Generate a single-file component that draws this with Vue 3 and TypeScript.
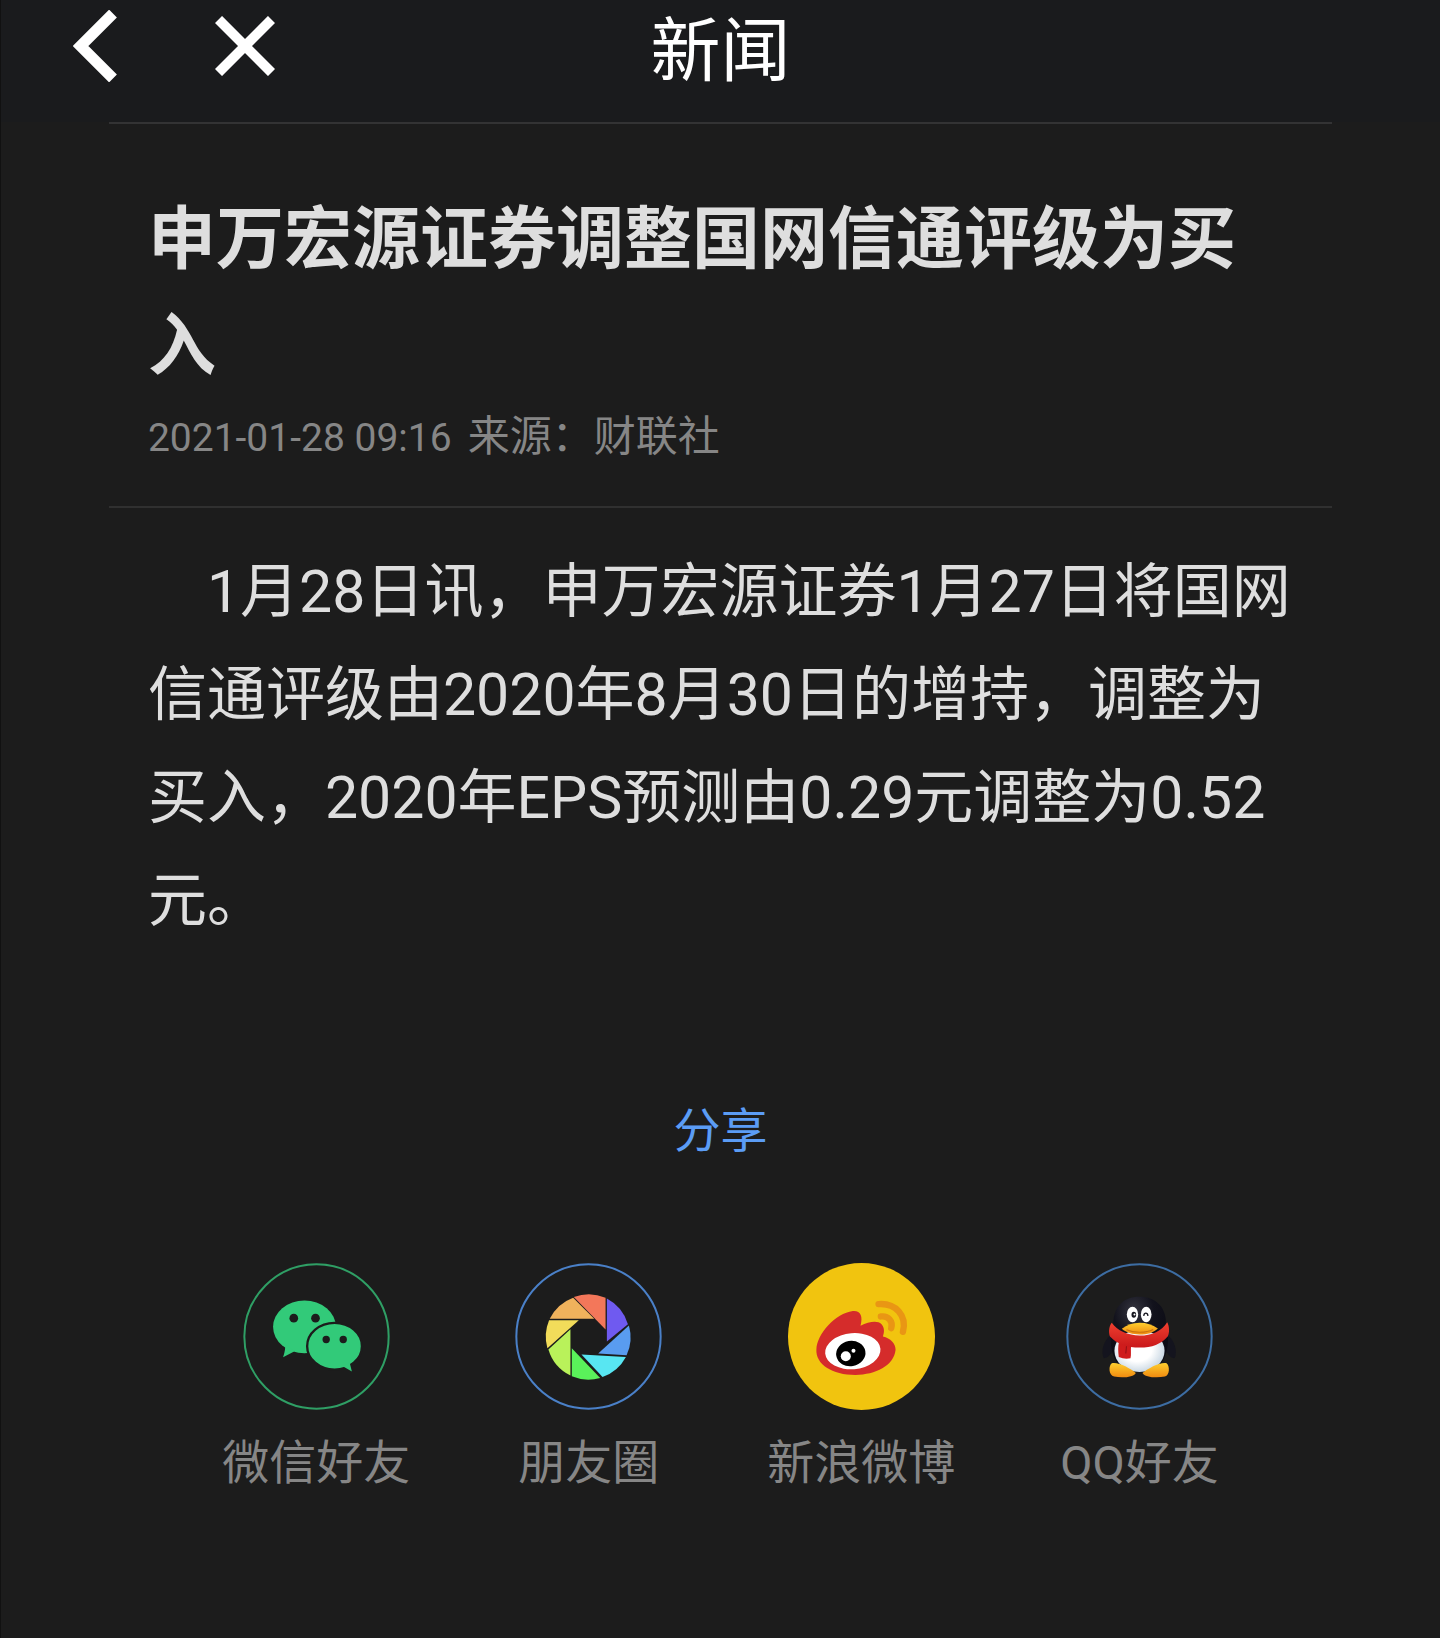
<script setup lang="ts">
interface ShareTarget {
  id: 'wechat' | 'moments' | 'weibo' | 'qq'
  label: string
}

const headline = '申万宏源证券调整国网信通评级为买入'
const publishedAt = '2021-01-28 09:16'
const source = '来源：财联社'
const body =
  '1月28日讯，申万宏源证券1月27日将国网信通评级由2020年8月30日的增持，调整为买入，2020年EPS预测由0.29元调整为0.52元。'

const targets: ShareTarget[] = [
  { id: 'wechat', label: '微信好友' },
  { id: 'moments', label: '朋友圈' },
  { id: 'weibo', label: '新浪微博' },
  { id: 'qq', label: 'QQ好友' },
]

// Aperture blades, clockwise from the top
const blades = [
  { fill: '#f3775a', d: 'M223 139 L318 236 L318 141 A128 128 0 0 0 223 139Z' },
  { fill: '#6f5af0', d: 'M322 143 L322 272 L385 220 A128 128 0 0 0 322 143Z' },
  { fill: '#599cf0', d: 'M388 224 L296 308 L381 313 A128 128 0 0 0 388 224Z' },
  { fill: '#58e6f2', d: 'M379 318 L246 311 L309 378 A128 128 0 0 0 379 318Z' },
  { fill: '#5af25a', d: 'M302 381 L217 292 L217 376 A128 128 0 0 0 302 381Z' },
  { fill: '#b9f25a', d: 'M213 374 L213 235 L147 296 A128 128 0 0 0 213 374Z' },
  { fill: '#f2dc5a', d: 'M144 292 L238 208 L149 208 A128 128 0 0 0 144 292Z' },
  { fill: '#f0b25c', d: 'M151 204 L284 204 L221 141 A128 128 0 0 0 151 204Z' },
]
</script>

<template>
  <div class="page">
    <header class="bar">
      <nav class="nav">
        <button type="button" class="icon-btn" aria-label="返回">
          <svg width="44" height="72" viewBox="0 0 44 72">
            <path d="M40 3.500 L7.500 36 L40 68.500" fill="none" stroke="#fff" stroke-width="11" />
          </svg>
        </button>
        <button type="button" class="icon-btn" aria-label="关闭">
          <svg width="60" height="60" viewBox="0 0 60 60">
            <path d="M3.500 3.500 L56.500 56.500 M56.500 3.500 L3.500 56.500" fill="none" stroke="#fff" stroke-width="10" />
          </svg>
        </button>
      </nav>
      <h1 class="bar-title">新闻</h1>
    </header>

    <main class="content">
      <article>
        <div class="head">
          <h2 class="headline">{{ headline }}</h2>
          <p class="meta">
            <time datetime="2021-01-28T09:16">{{ publishedAt }}</time>
            <span>{{ source }}</span>
          </p>
        </div>
        <p class="body">{{ body }}</p>
      </article>

      <section class="share">
        <h2 class="share-title">分享</h2>
        <div class="targets">
          <button v-for="t in targets" :key="t.id" type="button" class="target">
            <svg v-if="t.id === 'wechat'" class="logo" viewBox="38 37 440 440">
              <circle cx="258" cy="257" r="216" fill="none" stroke="#2f9f65" stroke-width="6" />
              <g fill="#32ca79">
                <ellipse cx="222" cy="228" rx="94" ry="79" />
                <path d="M164 278 Q166 296 158 319 L191 302Z" />
                <ellipse cx="312" cy="286" rx="82" ry="70" stroke="#1c1c1c" stroke-width="7" />
                <path d="M338 347 L364 362 L357 334Z" />
              </g>
              <g fill="#1c1c1c">
                <circle cx="190" cy="202" r="13" />
                <circle cx="255" cy="202" r="13" />
                <circle cx="287" cy="266" r="11" />
                <circle cx="338" cy="266" r="11" />
              </g>
            </svg>

            <svg v-else-if="t.id === 'moments'" class="logo" viewBox="47 37 440 440">
              <circle cx="267" cy="257" r="216" fill="none" stroke="#4a80c8" stroke-width="6" />
              <path v-for="b in blades" :key="b.fill" :d="b.d" :fill="b.fill" />
            </svg>

            <svg v-else-if="t.id === 'weibo'" class="logo" viewBox="38 37 440 440">
              <circle cx="258" cy="257" r="220" fill="#f1c40f" />
              <path
                d="M123 295 C125 250 180 188 232 181 C255 179 263 196 255 225 C280 213 305 208 318 220 C328 232 326 245 322 257 C345 262 360 278 360 297 C355 345 300 372 240 372 C170 372 120 340 123 295Z"
                fill="#d52c2b"
              />
              <ellipse cx="232" cy="301" rx="83" ry="54" fill="#fff" transform="rotate(-5 232 301)" />
              <ellipse cx="226" cy="308" rx="44" ry="38" fill="#000" transform="rotate(-10 226 308)" />
              <circle cx="211" cy="316" r="15" fill="#fff" />
              <circle cx="234" cy="300" r="6" fill="#fff" />
              <g fill="none" stroke="#e99614" stroke-width="19" stroke-linecap="round">
                <path d="M309 160 C360 156 395 195 382 243" />
                <path d="M316 197 C338 194 353 212 347 232" />
              </g>
            </svg>

            <svg v-else class="logo" viewBox="47 37 440 440">
              <defs>
                <radialGradient id="qq-head" cx="0.4" cy="0.2" r="0.7">
                  <stop offset="0" stop-color="#34343f" />
                  <stop offset="0.5" stop-color="#12121c" />
                  <stop offset="1" stop-color="#0b0b14" />
                </radialGradient>
                <radialGradient id="qq-belly" cx="0.45" cy="0.45" r="0.6">
                  <stop offset="0.5" stop-color="#fff" />
                  <stop offset="1" stop-color="#c3d3e0" />
                </radialGradient>
                <linearGradient id="qq-foot" x1="0" y1="0" x2="0" y2="1">
                  <stop offset="0" stop-color="#ffcf2e" />
                  <stop offset="1" stop-color="#f08a10" />
                </linearGradient>
                <linearGradient id="qq-scarf" x1="0" y1="0" x2="0" y2="1">
                  <stop offset="0" stop-color="#f04030" />
                  <stop offset="1" stop-color="#c9181a" />
                </linearGradient>
              </defs>
              <circle cx="267" cy="257" r="216" fill="none" stroke="#3d6da3" stroke-width="6" />
              <path d="M182 250 C160 270 150 300 160 322 C174 322 186 305 194 288Z" fill="#14141e" />
              <path d="M350 250 C372 270 382 300 372 322 C358 322 346 305 340 288Z" fill="#14141e" />
              <path
                d="M189 225 C186 170 218 138 267 138 C316 138 350 170 346 225 C360 262 352 320 322 350 L212 350 C180 320 174 262 189 225Z"
                fill="url(#qq-head)"
              />
              <ellipse cx="267" cy="300" rx="75" ry="63" fill="url(#qq-belly)" />
              <path d="M184 337 C205 333 238 352 256 366 C250 379 215 382 191 377 C174 372 174 346 184 337Z" fill="url(#qq-foot)" />
              <path d="M348 337 C328 333 294 352 276 366 C282 379 317 382 343 377 C358 372 358 346 348 337Z" fill="url(#qq-foot)" />
              <path d="M206 272 L242 282 C240 300 243 312 240 322 Q222 326 205 318 C203 300 202 288 206 272Z" fill="#cf1c1c" />
              <path
                d="M184 216 C200 240 232 254 268 254 C304 254 334 240 350 214 C357 228 357 244 352 256 C332 280 304 290 268 290 C230 290 200 280 178 256 C174 242 176 226 184 216Z"
                fill="url(#qq-scarf)"
              />
              <path d="M228 286 L226 308" stroke="#8f1015" stroke-width="3" />
              <ellipse cx="246" cy="191" rx="17" ry="23" fill="#fff" />
              <ellipse cx="287" cy="191" rx="16" ry="23" fill="#fff" />
              <ellipse cx="250" cy="192" rx="7" ry="9" fill="#15151e" />
              <circle cx="252" cy="191" r="3" fill="#fff" />
              <path d="M280 194 C281 185 291 185 292 194" fill="none" stroke="#15151e" stroke-width="4" stroke-linecap="round" />
              <path
                d="M214 234 C230 222 246 216 267 216 C288 216 306 222 322 233 C308 246 290 251 267 251 C246 251 228 246 214 234Z"
                fill="url(#qq-foot)"
              />
              <path d="M228 237 C250 247 286 247 308 236" fill="none" stroke="#c97210" stroke-width="3" />
            </svg>

            <span class="target-label">{{ t.label }}</span>
          </button>
        </div>
      </section>
    </main>
  </div>
</template>

<style>
body {
  margin: 0;
  background: #1c1c1c;
}
</style>

<style scoped>
.page {
  box-sizing: border-box;
  min-height: 100vh;
  background: #1c1c1c;
  border-left: 1px solid #111;
  font-family: Roboto, 'Noto Sans CJK SC', sans-serif;
  color: #dedede;
}

h1,
h2,
p {
  margin: 0;
  font-weight: 400;
}

button {
  padding: 0;
  border: 0;
  background: none;
  font: inherit;
  color: inherit;
  cursor: pointer;
}

.bar {
  display: grid;
  grid-template-columns: 1fr auto 1fr;
  align-items: start;
  height: 122px;
  background: #1a1b1d;
}

.nav {
  display: flex;
  align-items: center;
  gap: 98px;
  height: 92px;
  padding-left: 72px;
}

.icon-btn {
  display: flex;
}

.bar-title {
  font-size: 70px;
  line-height: 104px;
  color: #fff;
}

.content {
  margin: 0 7.5%;
}

.head {
  padding: 63px 39px 38px;
  border-top: 2px solid #333334;
  border-bottom: 2px solid #303030;
}

.headline {
  font-size: 68px;
  line-height: 107px;
  font-weight: 700;
}

.meta {
  display: flex;
  align-items: baseline;
  gap: 16px;
  margin-top: 6px;
  font-size: 42px;
  line-height: 60px;
  color: #868686;
}

.meta time {
  font-size: 39px;
}

.body {
  padding: 32px 35px 0 39px;
  font-size: 59px;
  line-height: 103px;
  text-indent: 1em;
}

.share {
  margin-top: 149px;
  text-align: center;
}

.share-title {
  font-size: 47px;
  line-height: 60px;
  color: #5b9cf5;
}

.targets {
  display: flex;
  justify-content: center;
  gap: 105px;
  margin-top: 102px;
}

.target {
  display: flex;
  flex-direction: column;
  align-items: center;
  gap: 23px;
}

.logo {
  width: 147px;
  height: 147px;
}

.target-label {
  font-size: 47px;
  line-height: 60px;
  white-space: nowrap;
  color: #868686;
}
</style>
